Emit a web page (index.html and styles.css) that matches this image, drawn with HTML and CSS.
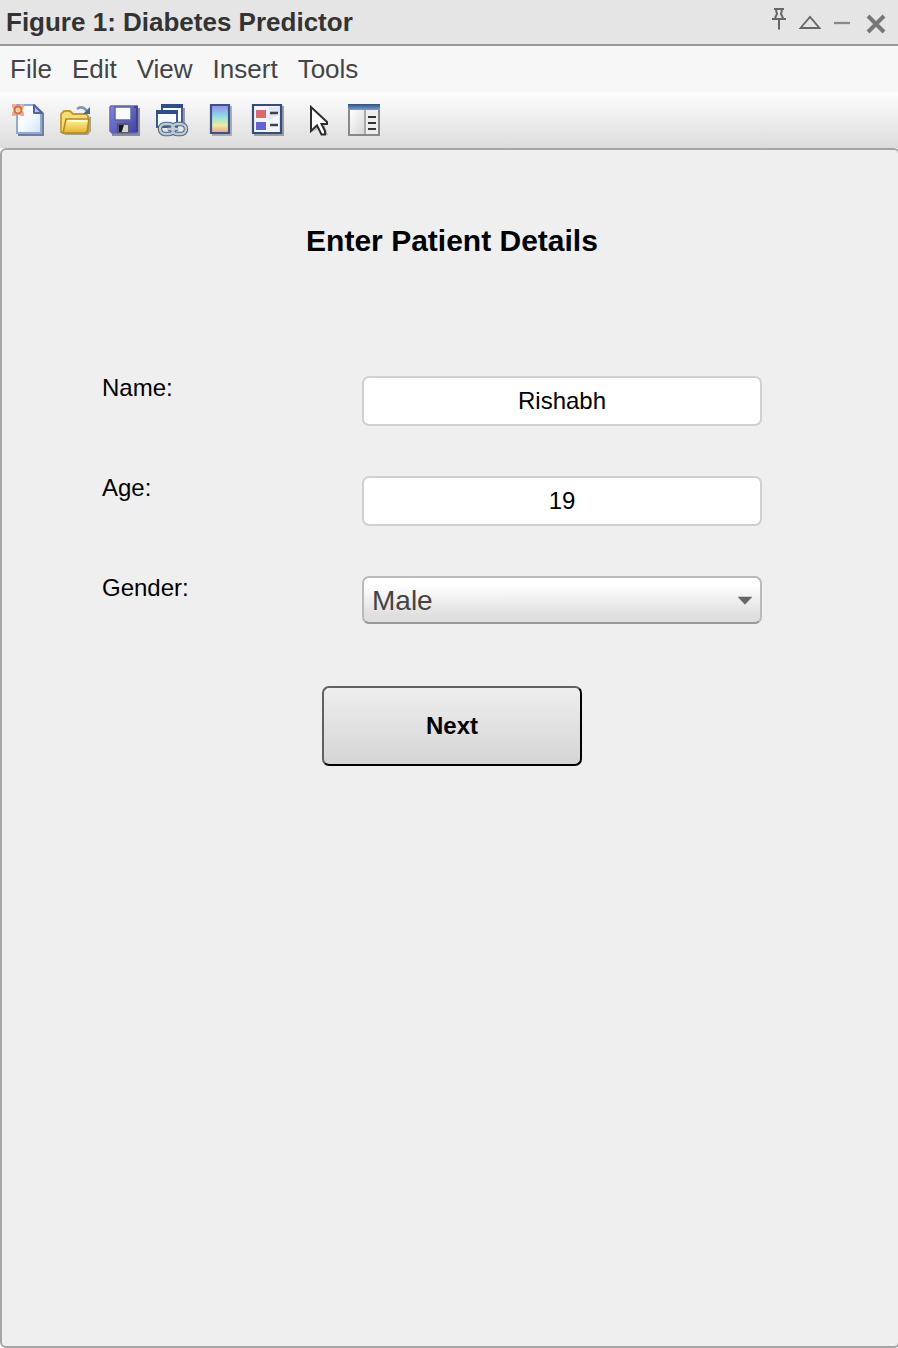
FILE: index.html
```html
<!DOCTYPE html>
<html lang="en">
<head>
<meta charset="utf-8">
<title>Figure 1: Diabetes Predictor</title>
<link rel="stylesheet" href="styles.css">
</head>
<body>
<div class="window">
  <header class="titlebar">
    <h1 class="title">Figure 1: Diabetes Predictor</h1>
    <svg class="controls" width="128" height="44" viewBox="770 0 128 44" fill="none" stroke="#666" stroke-width="2">
      <path d="M774 9H784M776 10L777 14L775 18M782 10L781 14L783 18M772 19H786M779 19V29.500"/>
      <path d="M800.500 28L810 17L819.500 28Z" stroke-width="1.800"/>
      <path d="M834 23H850" stroke="#888" stroke-width="2.300"/>
      <path d="M868 16L884 32M884 16L868 32" stroke="#777" stroke-width="4"/>
    </svg>
  </header>
  <nav class="menubar"><span>File</span><span>Edit</span><span>View</span><span>Insert</span><span>Tools</span></nav>
  <div class="toolbar">
    <svg class="tool" viewBox="0 0 32 32">
      <defs>
        <linearGradient id="page" x2="1" y2="1"><stop stop-color="#fff"/><stop offset=".5" stop-color="#f5faff"/><stop offset="1" stop-color="#cfe2fa"/></linearGradient>
        <linearGradient id="gold" x2="0" y2="1"><stop stop-color="#fff3a0"/><stop offset="1" stop-color="#e3b52c"/></linearGradient>
        <linearGradient id="violet" x2="1" y2="1"><stop stop-color="#8585e0"/><stop offset="1" stop-color="#4040a4"/></linearGradient>
        <linearGradient id="rainbow" x2="0" y2="1"><stop stop-color="#9a8ce0"/><stop offset=".3" stop-color="#8bc8ee"/><stop offset=".5" stop-color="#a5e8cf"/><stop offset=".73" stop-color="#efe8a0"/><stop offset="1" stop-color="#e8a28e"/></linearGradient>
        <linearGradient id="blue" x2="0" y2="1"><stop stop-color="#304f80"/><stop offset="1" stop-color="#75a1cd"/></linearGradient>
        <linearGradient id="pane" x2="1" y2="1"><stop stop-color="#fff"/><stop offset="1" stop-color="#d8d8d8"/></linearGradient>
      </defs>
      <path d="M6 2H24L32 9V32H6Z" fill="#5d6b8c" opacity=".85"/>
      <path d="M5 1H22L29 8V29H5Z" fill="url(#page)" stroke="#8ea8da" stroke-width="2"/>
      <path d="M22 1V9H30Z" fill="#b6c6eb" stroke="#5364a0" stroke-width="2" stroke-linejoin="round"/>
      <path d="M0 0H3L6 2L9 0H12V3L10 6L12 9V12H9L6 10L3 12H0V9L2 6L0 3Z" fill="#efaa88"/>
      <circle cx="6" cy="6" r="3.500" fill="#f5d29b" stroke="#d46c43" stroke-width="2"/>
    </svg>
    <svg class="tool" viewBox="0 0 32 32">
      <path d="M4 31H28L31 27V13L28 12Z" fill="#777" opacity=".6"/>
      <path d="M1 28V10L4 7H10L13 10H26L28 12V27L25 29H3Z" fill="#f5dc75" stroke="#c29a35" stroke-width="1.800"/>
      <path d="M6 15H29L27 28L25 29H3Z" fill="url(#gold)" stroke="#b58b21" stroke-width="1.600"/>
      <path d="M8 17H27" stroke="#fffbd2" stroke-width="2"/>
      <path d="M17 5Q22 1 27 7" fill="none" stroke="#8297ac" stroke-width="2.500"/>
      <path d="M30 3V10H23Z" fill="#496a94"/>
    </svg>
    <svg class="tool" viewBox="0 0 32 32">
      <path d="M4 4H32V32H4Z" fill="#555c78" opacity=".65"/>
      <path d="M3 2H29V29H4L2 27V3Z" fill="url(#violet)" stroke="#6666bd" stroke-width="1.500"/>
      <path d="M26 3H29V28" fill="none" stroke="#30307b" stroke-width="2" opacity=".7"/>
      <path d="M7 3H23V16H7Z" fill="#f9fbff" stroke="#5b65a9" stroke-width="1.500"/>
      <path d="M9 19H21V29H9Z" fill="#555a6b"/>
      <path d="M11 21H16L13 28H11Z" fill="#161916"/>
      <path d="M16 21H20V28H14Z" fill="#d5d8c8"/>
    </svg>
    <svg class="tool" viewBox="0 0 32 32">
      <path d="M6 2H26V20H6Z" fill="#f8faff" stroke="#3e5996" stroke-width="2"/>
      <path d="M5 0H27V4H5Z" fill="#2e4d8d"/>
      <path d="M28 4V19" stroke="#999" stroke-width="2"/>
      <path d="M1 8H21V23H1Z" fill="#f8faff" stroke="#3e5996" stroke-width="2"/>
      <path d="M0 6H22V10H0Z" fill="#2e4d8d"/>
      <g fill="none" stroke="#53677d" stroke-width="4.500"><rect x="4" y="20" width="14" height="10" rx="5"/><rect x="16" y="20" width="14" height="10" rx="5"/><path d="M12 25H22"/></g>
      <g fill="none" stroke="#b9cad8" stroke-width="2.400"><rect x="4" y="20" width="14" height="10" rx="5"/><rect x="16" y="20" width="14" height="10" rx="5"/><path d="M11 25H23"/></g>
    </svg>
    <svg class="tool" viewBox="0 0 32 32">
      <path d="M8 2H28V32H8Z" fill="#8f949c" opacity=".7"/>
      <path d="M7 1H25V29H7Z" fill="url(#rainbow)" stroke="#3c528b" stroke-width="2.200"/>
    </svg>
    <svg class="tool" viewBox="0 0 32 32">
      <path d="M2 2H32V32H2Z" fill="#969696" opacity=".9"/>
      <path d="M1 1H29V29H1Z" fill="#f3f6ff" stroke="#344b83" stroke-width="2.200"/>
      <path d="M17 3H28V10L17 16Z" fill="#dfe6f4"/>
      <path d="M4 6H14V14H4Z" fill="#d96c69"/><path d="M4 18H14V26H4Z" fill="#6263d8"/>
      <path d="M18 9H26M18 21H26" stroke="#444" stroke-width="2.600"/>
    </svg>
    <svg class="tool" viewBox="0 0 32 32">
      <path d="M12 28L18 23L23 31H28L24 21L29 19Z" fill="#aaa"/>
      <path d="M11 3V27L17 21.500L21.500 30.500H25V27L21.500 20H27V18Z" fill="#fff" stroke="#2d2d2d" stroke-width="2"/>
    </svg>
    <svg class="tool" viewBox="0 0 32 32">
      <path d="M1 1H31V31H1Z" fill="#eee" stroke="#888" stroke-width="2"/>
      <path d="M0 0H32V6H0Z" fill="url(#blue)"/>
      <path d="M2 6H16V30H2Z" fill="url(#pane)"/>
      <path d="M17 6V30" stroke="#aaa" stroke-width="2"/>
      <path d="M20 13H28M20 19H28M20 25H28" stroke="#333" stroke-width="2.200"/>
    </svg>
  </div>
  <main class="panel">
    <h2 class="heading">Enter Patient Details</h2>
    <div class="form">
      <div class="row"><span class="label">Name:</span><div class="field">Rishabh</div></div>
      <div class="row"><span class="label">Age:</span><div class="field">19</div></div>
      <div class="row"><span class="label">Gender:</span>
        <div class="select"><span class="value">Male</span><svg width="14" height="9" viewBox="0 0 14 9"><path d="M0 0H14V2L7 9L0 2Z" fill="#ccc"/><path d="M0 1H14L7 8.500Z" fill="#666"/></svg></div>
      </div>
    </div>
    <button class="next">Next</button>
  </main>
</div>
</body>
</html>
```
FILE: styles.css
```css
* { box-sizing: border-box; }
body { margin: 0; background: #fff; font-family: "Liberation Sans", Arial, sans-serif; }
.window { display: flex; flex-direction: column; height: 1348px; overflow: hidden; }
.titlebar { display: flex; justify-content: space-between; height: 46px; padding-left: 6px; background: #e5e5e5; border-bottom: 2px solid #999; }
.title { margin: 0; font-size: 26px; line-height: 44px; color: #333; white-space: nowrap; }
.controls { display: block; }
.menubar { display: flex; gap: 20px; height: 46px; padding-left: 10px; background: #f7f7f7; font-size: 26px; line-height: 46px; color: #444; }
.toolbar { display: flex; gap: 16px; height: 56px; padding: 12px 12px 0; background: linear-gradient(#fdfdfd, #dcdcdc); }
.tool { width: 32px; height: 32px; flex: none; overflow: visible; }
.panel { flex: 1; width: 900px; background: #efefef; border: 2px solid #a6a6a6; border-radius: 6px; padding-top: 69px; }
.heading { margin: 0; padding-left: 4px; text-align: center; font-size: 30px; line-height: 44px; color: #000; }
.form { display: flex; flex-direction: column; gap: 50px; margin: 113px 0 0 100px; }
.row { display: flex; height: 50px; }
.label { width: 260px; font-size: 24px; line-height: 24px; }
.field { width: 400px; height: 50px; border: 2px solid #d0d0d0; border-radius: 7px; background: #fff; font-size: 24px; line-height: 46px; text-align: center; }
.select { display: flex; align-items: center; justify-content: space-between; width: 400px; height: 48px; padding: 0 8px; border: 2px solid #bababa; border-bottom-color: #999; border-radius: 7px; background: linear-gradient(#fff 15%, #dfdfdf 85%); color: #444; font-size: 28px; }
.value { padding-top: 2px; }
.next { display: block; width: 260px; height: 80px; margin: 60px 0 0 320px; padding: 0; border: 2px solid; border-color: #606060 #000 #000 #606060; border-radius: 7px; background: linear-gradient(#eee, #d5d5d5); color: #000; font: bold 24px "Liberation Sans", Arial, sans-serif; }
```
